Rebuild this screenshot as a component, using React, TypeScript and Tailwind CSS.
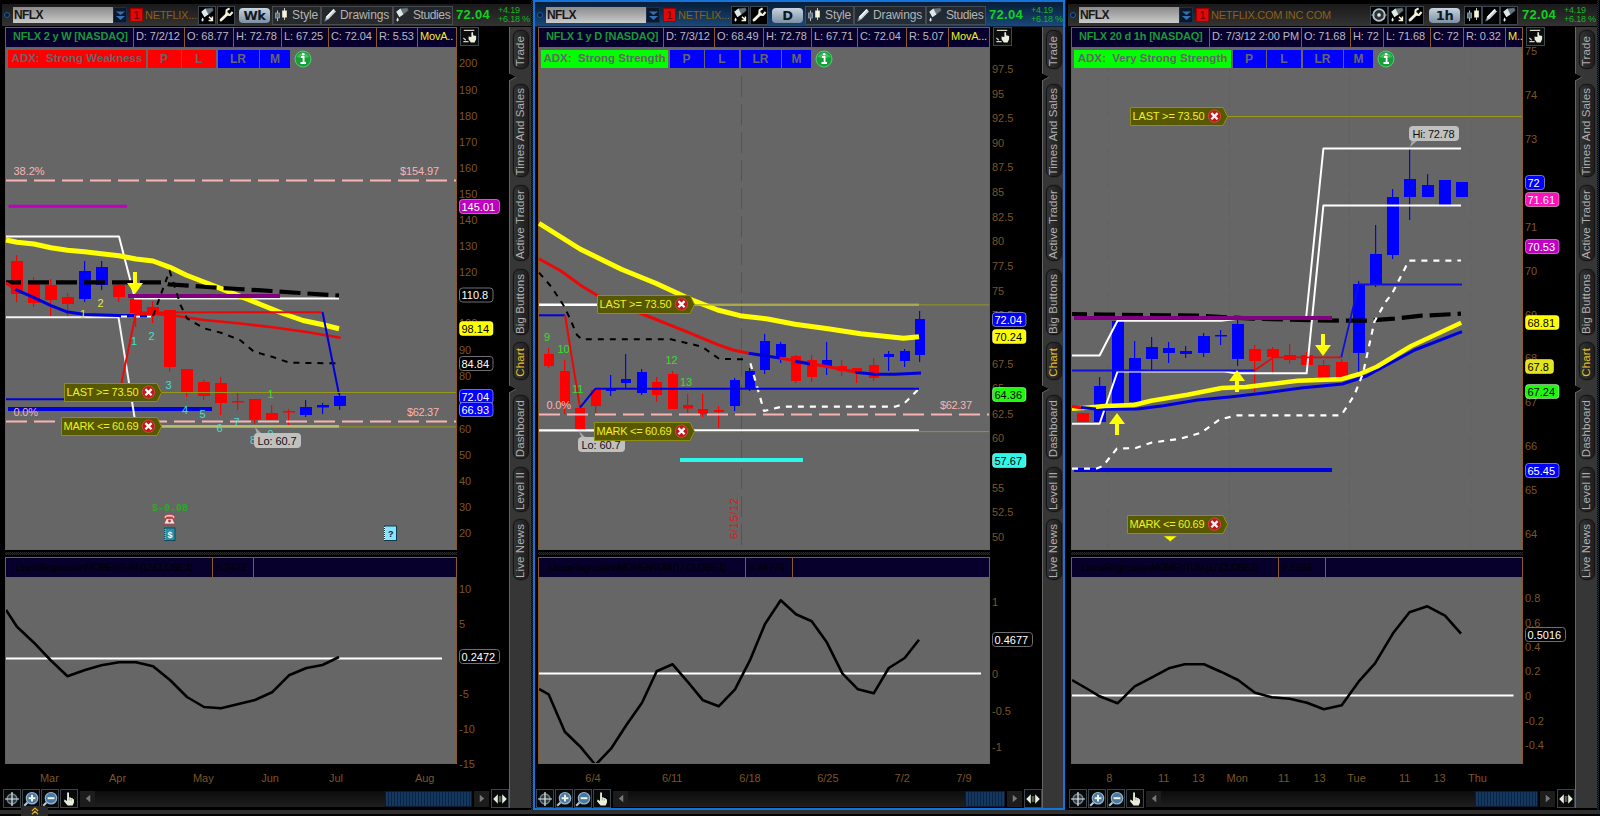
import React from "react";
import clsx from "clsx";

type Candle = [x: number, top: number, bottom: number, high: number, low: number, color: "r" | "b"];
type Line = { pts: string; color: string; w: number; dash?: string; offset?: number };
type Label = { x: number; y: number; text: string; color: string; len?: number; size?: number; mono?: boolean };
type Bubble = { y: number; text: string; fill: string; color: string; w?: number; stroke?: string };
type Tag = { x: number; y: number; text: string };
type Arrow = { x: number; y: number; dir: "up" | "down" };

type PanelData = {
  active?: boolean;
  compact?: boolean;
  company: string;
  period: string;
  info: { text: string; w: string }[];
  adx: { text: string; w: string; color: string }[];
  back: Line[];
  candles: Candle[];
  candleWidth: number;
  lines: Line[];
  labels: Label[];
  arrows: Arrow[];
  tags: Tag[];
  callout: { x: number; y: number; w: number; text: string; tail: string };
  axis: [number, string][];
  bubbles: Bubble[];
  study: { curve: string; zero: string; axis: [number, string][]; bubble: Bubble; cellA: string; cellB: string; name: string; value: string };
  dates: [number, string][];
  thumb: string;
};

const RED = "#ff0000";
const BLUE = "#0000ff";
const LINE_RED = "#ec0808";
const LINE_BLUE = "#0000dc";
const YELLOW = "#ffff00";
const WHITE = "#ffffff";
const PINK = "#f8b4b4";
const CYAN = "#40e0d0";
const GREEN = "#30e030";
const ALERT = "#989818";
const BLACK = "#000000";
const PURPLE = "#800080";
const MAGENTA = "#c000c0";
const AXIS = "#7c5526";

const weekly: PanelData = {
  company: "NETFLIX....",
  period: "Wk",
  info: [
    { text: "NFLX 2 y W [NASDAQ]", w: "w-[128px]" },
    { text: "D: 7/2/12", w: "w-[51px]" },
    { text: "O: 68.77", w: "w-[49px]" },
    { text: "H: 72.78", w: "w-[48px]" },
    { text: "L: 67.25", w: "w-[47px]" },
    { text: "C: 72.04", w: "w-[48px]" },
    { text: "R: 5.53", w: "w-[41px]" },
    { text: "MovA..", w: "w-[38px]" },
  ],
  adx: [
    { text: "ADX:  Strong Weakness", w: "w-[138px]", color: "bg-[#ff0000]" },
    { text: "P", w: "w-[33px]", color: "bg-[#ff0000]" },
    { text: "L", w: "w-[34px]", color: "bg-[#ff0000]" },
    { text: "LR", w: "w-[41px]", color: "bg-[#0000ff]" },
    { text: "M", w: "w-[30px]", color: "bg-[#0000ff]" },
  ],
  back: [],
  candleWidth: 12,
  candles: [
    [17, 261, 294, 255, 302, "r"],
    [34, 284, 303, 277, 307, "r"],
    [51, 285, 300, 279, 317, "r"],
    [68, 297, 304, 293, 318, "r"],
    [85, 271, 299, 261, 302, "b"],
    [102, 267, 285, 261, 290, "b"],
    [119, 285, 297, 284, 302, "r"],
    [136, 299, 313, 299, 327, "r"],
    [153, 307, 314, 301, 323, "r"],
    [170, 310, 367, 310, 372, "r"],
    [187, 369, 393, 369, 397, "r"],
    [204, 382, 396, 380, 400, "r"],
    [221, 383, 403, 377, 415, "r"],
    [238, 401, 402.5, 393, 410, "r"],
    [255, 399, 420, 399, 424, "r"],
    [272, 413, 420, 405, 420, "r"],
    [289, 411, 412.5, 409, 425, "r"],
    [306, 407, 415, 400, 417, "b"],
    [323, 405, 407.5, 403, 414, "b"],
    [340, 396, 406, 393, 410, "b"],
  ],
  lines: [
    { pts: "6,180.5 456,180.5", color: PINK, w: 2, dash: "21 7" },
    { pts: "6,421.5 456,421.5", color: PINK, w: 2, dash: "21 7" },
    { pts: "8.5,206.3 127,206.3", color: MAGENTA, w: 3 },
    { pts: "6,399.3 64,399.3", color: LINE_BLUE, w: 2 },
    { pts: "8,409 212,409", color: LINE_BLUE, w: 4 },
    { pts: "6,236.5 119,236.5 135,298.5 339,298.5", color: WHITE, w: 2 },
    { pts: "6,317.3 118.5,317.3 136,426.5 339,426.5", color: "#f4f4f4", w: 2 },
    { pts: "6,240 17,242.3 34,244 51,247.7 67.5,250.3 84.5,251.7 101.5,253.7 119,255.7 136,259 153,261 170,267.3 186,275 204,282 221,288.7 238,295.3 262,305 283,313.5 303,320.5 322,324.5 339,328.7", color: YELLOW, w: 5 },
    { pts: "6,282.3 162,282.3 169,284.3 190,285.7 207,287 238,289 272,291 300,293 339,295.5", color: BLACK, w: 4.2, dash: "21 7", offset: 6 },
    { pts: "128,296 280,296", color: PURPLE, w: 4 },
    { pts: "6,282.7 15.5,289.5", color: LINE_RED, w: 3 },
    { pts: "15.3,289.3 34,297.7 51,305.7 66.4,311.7 84.8,314.5 119,315.5 151,315.5", color: LINE_BLUE, w: 3 },
    { pts: "121,316.5 151,316.5", color: WHITE, w: 2, dash: "6 7" },
    { pts: "121.3,384 136,312.5 322,312.3", color: LINE_RED, w: 2 },
    { pts: "136,314 155,314 170,315 204,320 238,323.3 272.5,327.3 306.5,332 340.6,337.7", color: LINE_RED, w: 2.6 },
    { pts: "153,316 169.6,270.7 180.5,305 187,318.3 204,328.3 221,332.7 240,340 254,351.7 272,356.7 289.5,362.7 336,363.3", color: BLACK, w: 2, dash: "6 6" },
    { pts: "322.5,312 339,394.3", color: LINE_BLUE, w: 2 },
    { pts: "161,392.5 456,392.5", color: ALERT, w: 1 },
    { pts: "161,426.9 456,426.9", color: ALERT, w: 1 },
  ],
  labels: [
    { x: 13.5, y: 175, text: "38.2%", color: PINK, len: 31 },
    { x: 400, y: 175, text: "$154.97", color: PINK, len: 39 },
    { x: 13.5, y: 416, text: "0.0%", color: PINK, len: 24.5 },
    { x: 407, y: 416, text: "$62.37", color: PINK, len: 32 },
    { x: 80, y: 318, text: "1", color: "#e8e840" },
    { x: 97.5, y: 307, text: "2", color: "#e8e840" },
    { x: 131, y: 345, text: "1", color: CYAN },
    { x: 148.5, y: 340, text: "2", color: CYAN },
    { x: 165.5, y: 389, text: "3", color: CYAN },
    { x: 182, y: 414, text: "4", color: CYAN },
    { x: 199.5, y: 418, text: "5", color: CYAN },
    { x: 216.5, y: 432, text: "6", color: CYAN },
    { x: 233.5, y: 426, text: "7", color: CYAN },
    { x: 250, y: 444, text: "8", color: CYAN },
    { x: 267.5, y: 438, text: "9", color: CYAN },
    { x: 267.5, y: 398, text: "1", color: GREEN },
    { x: 152, y: 511, text: "$-0.08", color: "#20b020", len: 36, size: 10, mono: true },
  ],
  arrows: [{ x: 135, y: 272, dir: "down" }],
  tags: [
    { x: 64, y: 383.5, text: "LAST >= 73.50" },
    { x: 61, y: 417.5, text: "MARK <= 60.69" },
  ],
  callout: { x: 254, y: 433, w: 47, text: "Lo: 60.7", tail: "255,427 257,435 263,435" },
  axis: [
    [63, "200"], [90, "190"], [116, "180"], [142, "170"], [168, "160"], [194, "150"], [220, "140"], [246, "130"],
    [272, "120"], [323, "100"], [350, "90"], [376, "80"], [429, "60"], [455, "50"], [481, "40"], [507, "30"], [533, "20"],
  ],
  bubbles: [
    { y: 199, text: "145.01", fill: MAGENTA, color: WHITE, w: 40 },
    { y: 287.5, text: "110.8", fill: BLACK, color: WHITE, stroke: "#707070" },
    { y: 321, text: "98.14", fill: YELLOW, color: BLACK },
    { y: 356, text: "84.84", fill: BLACK, color: WHITE, stroke: "#707070" },
    { y: 389, text: "72.04", fill: BLUE, color: WHITE },
    { y: 402, text: "66.93", fill: BLUE, color: WHITE },
  ],
  study: {
    name: "LinearRegressionMOMENTUM (17,CLOSE,1)",
    value: "0.2472",
    cellA: "w-[207px]",
    cellB: "w-[41px]",
    curve: "6,610 17,626.7 34,642.7 50.4,660 67.5,676.3 85,670 101.5,665.3 119,662.3 136,662.3 153,666.3 170,680 187,697 204,707 221,708.3 255,700 272,692.3 289,675.3 306.5,668 322.5,665 339,657",
    zero: "6,658.5 442,658.5",
    axis: [[589, "10"], [624.3, "5"], [694, "-5"], [729, "-10"], [764, "-15"]],
    bubble: { y: 649, text: "0.2472", fill: BLACK, color: WHITE, stroke: "#707070", w: 40 },
  },
  dates: [[49.4, "Mar"], [117.5, "Apr"], [203.3, "May"], [270, "Jun"], [336, "Jul"], [424.7, "Aug"]],
  thumb: "w-[87px]",
};

const daily: PanelData = {
  active: true,
  company: "NETFLIX....",
  period: "D",
  info: [
    { text: "NFLX 1 y D [NASDAQ]", w: "w-[125px]" },
    { text: "D: 7/3/12", w: "w-[51px]" },
    { text: "O: 68.49", w: "w-[49px]" },
    { text: "H: 72.78", w: "w-[48px]" },
    { text: "L: 67.71", w: "w-[46px]" },
    { text: "C: 72.04", w: "w-[49px]" },
    { text: "R: 5.07", w: "w-[42px]" },
    { text: "MovA...", w: "w-[40px]" },
  ],
  adx: [
    { text: "ADX:  Strong Strength", w: "w-[127px]", color: "bg-[#00ff00]" },
    { text: "P", w: "w-[34px]", color: "bg-[#0000ff]" },
    { text: "L", w: "w-[34px]", color: "bg-[#0000ff]" },
    { text: "LR", w: "w-[40px]", color: "bg-[#0000ff]" },
    { text: "M", w: "w-[29px]", color: "bg-[#0000ff]" },
  ],
  back: [{ pts: "208.5,76 208.5,546", color: "#e01818", w: 1, dash: "21 7" }],
  candleWidth: 10,
  candles: [
    [16, 354, 366, 348, 368, "r"],
    [32, 371, 403, 360, 414, "r"],
    [47.3, 408, 429, 408, 429, "r"],
    [63, 390, 406, 390, 413, "r"],
    [78, 389, 391, 375, 396, "b"],
    [93, 379, 383, 354, 388, "b"],
    [109, 372, 393, 369, 395, "b"],
    [124, 382, 395, 377, 402, "r"],
    [140, 374, 409, 371, 409, "r"],
    [155, 405, 408.5, 394, 413, "r"],
    [170, 409, 414, 394, 417, "r"],
    [185.5, 410, 412, 406, 428, "r"],
    [202, 380, 406, 378, 411, "b"],
    [217, 371, 389, 368, 391, "b"],
    [232, 341, 370, 334, 374, "b"],
    [247.7, 344, 357, 342, 363, "b"],
    [263, 356, 381, 355, 383, "r"],
    [278.7, 360, 377, 355, 382, "r"],
    [293.5, 360, 367, 342, 375, "b"],
    [309.3, 366, 371, 360, 376, "r"],
    [324, 368, 372, 368, 383, "r"],
    [340.7, 365, 378, 358, 381, "r"],
    [355.5, 354, 357, 351, 371, "b"],
    [371.7, 351, 361, 349, 367, "b"],
    [386.8, 319, 355, 311, 362, "b"],
  ],
  lines: [
    { pts: "6,414.5 456,414.5", color: PINK, w: 2, dash: "21 7" },
    { pts: "6,304.7 64,304.7", color: WHITE, w: 2.4 },
    { pts: "160,304.7 386,304.7", color: "#c8c8a0", w: 2 },
    { pts: "6,430.4 386,430.4", color: WHITE, w: 2.2 },
    { pts: "6,258.7 28,271 48.7,286 64,295.3 110.6,314.5 155.4,332.3 184.7,344.7 200,350 215.7,353.3", color: LINE_RED, w: 3 },
    { pts: "215.7,353.3 246.7,358", color: LINE_BLUE, w: 3 },
    { pts: "246.7,358 298,367.3 322.4,372", color: LINE_RED, w: 3 },
    { pts: "262,361.3 277,364", color: LINE_BLUE, w: 3 },
    { pts: "322.4,372.3 341.4,374.3 362,374.3 388,373", color: LINE_BLUE, w: 3 },
    { pts: "6,223.3 47,249 88.3,269.3 122.7,283.3 160.6,300.7 184.7,310 207,315.7 234.6,319 262,324.3 295,328.7 327.6,333.7 370.6,338.3 386,336.7", color: YELLOW, w: 5 },
    { pts: "6,272.7 18.3,286.7 31.4,306.7 37.6,320 44,335 48.7,339.3 138,339.3 169,346.7 186.4,359 215.7,359.3", color: BLACK, w: 2, dash: "6 6" },
    { pts: "217.4,363.3 231,411 248.4,406.7 362,406.7 370.6,404 386,388.7", color: WHITE, w: 2.2, dash: "6 6" },
    { pts: "6,315.3 32,315.3", color: LINE_BLUE, w: 2 },
    { pts: "32,315 47,407.7", color: LINE_RED, w: 2 },
    { pts: "47,407.7 62.4,388.7 386,388.7", color: LINE_BLUE, w: 2 },
    { pts: "147,460 270,460", color: "#30f8e8", w: 4 },
    { pts: "160,304.9 456,304.9", color: ALERT, w: 1 },
    { pts: "160,431.6 456,431.6", color: ALERT, w: 1 },
  ],
  labels: [
    { x: 13.5, y: 409, text: "0.0%", color: PINK, len: 24.5 },
    { x: 407, y: 409, text: "$62.37", color: PINK, len: 32 },
    { x: 11, y: 341, text: "9", color: GREEN },
    { x: 24.5, y: 353, text: "10", color: GREEN },
    { x: 39, y: 393, text: "11", color: GREEN },
    { x: 132.5, y: 364, text: "12", color: GREEN },
    { x: 147, y: 386, text: "13", color: GREEN },
  ],
  arrows: [],
  tags: [
    { x: 64, y: 295.5, text: "LAST >= 73.50" },
    { x: 61, y: 422.5, text: "MARK <= 60.69" },
  ],
  callout: { x: 45, y: 437, w: 47, text: "Lo: 60.7", tail: "46,431 49,439 54,439" },
  axis: [
    [69, "97.5"], [94, "95"], [118.3, "92.5"], [143, "90"], [167, "87.5"], [192, "85"], [217, "82.5"], [241, "80"], [266, "77.5"],
    [291, "75"], [315, "72.5"], [364, "67.5"], [388, "65"], [414, "62.5"], [438, "60"], [488, "55"], [512, "52.5"], [537, "50"],
  ],
  bubbles: [
    { y: 312, text: "72.04", fill: BLUE, color: WHITE },
    { y: 329, text: "70.24", fill: YELLOW, color: BLACK },
    { y: 387, text: "64.36", fill: "#20f810", color: BLACK },
    { y: 453, text: "57.67", fill: "#30f8e8", color: BLACK },
  ],
  study: {
    name: "LinearRegressionMOMENTUM (17,CLOSE,1)",
    value: "0.46770",
    cellA: "w-[207px]",
    cellB: "w-[47px]",
    curve: "6,689 15.6,694.3 31.8,731.7 47.3,746.7 62.4,765 78,748.7 93.4,725 109,702.7 123.7,671.3 139.6,664.3 155.4,682.7 170,700.3 185.7,706.3 202,689.3 217.4,659.3 232,624 247.7,600.3 263,614.3 278.7,621.3 293.8,642.3 309.3,673.3 325,689.3 340.7,693.3 355.8,668 371.7,658 386,639.7",
    zero: "6,673.5 448,673.5",
    axis: [[602, "1"], [674, "0"], [710.5, "-0.5"], [746.5, "-1"]],
    bubble: { y: 632, text: "0.4677", fill: BLACK, color: WHITE, stroke: "#707070", w: 40 },
  },
  dates: [[60, "6/4"], [139.2, "6/11"], [217, "6/18"], [294.9, "6/25"], [369.2, "7/2"], [430.9, "7/9"]],
  thumb: "w-[40px]",
};

const hourly: PanelData = {
  compact: true,
  company: "NETFLIX.COM INC COM",
  period: "1h",
  info: [
    { text: "NFLX 20 d 1h [NASDAQ]", w: "w-[138px]" },
    { text: "D: 7/3/12 2:00 PM", w: "w-[92px]" },
    { text: "O: 71.68", w: "w-[49px]" },
    { text: "H: 72", w: "w-[33px]" },
    { text: "L: 71.68", w: "w-[47px]" },
    { text: "C: 72", w: "w-[33px]" },
    { text: "R: 0.32", w: "w-[42px]" },
    { text: "M..", w: "w-[16px]" },
  ],
  adx: [
    { text: "ADX:  Very Strong Strength", w: "w-[157px]", color: "bg-[#00ff00]" },
    { text: "P", w: "w-[33px]", color: "bg-[#0000ff]" },
    { text: "L", w: "w-[34px]", color: "bg-[#0000ff]" },
    { text: "LR", w: "w-[40px]", color: "bg-[#0000ff]" },
    { text: "M", w: "w-[29px]", color: "bg-[#0000ff]" },
  ],
  back: [
    { pts: "42.5,48 42.5,548", color: "#616161", w: 1, dash: "6 3" },
    { pts: "163.5,48 163.5,548", color: "#616161", w: 1, dash: "6 3" },
    { pts: "283.5,48 283.5,548", color: "#616161", w: 1, dash: "6 3" },
    { pts: "404.5,48 404.5,548", color: "#616161", w: 1, dash: "6 3" },
  ],
  candleWidth: 12,
  candles: [
    [17, 413, 422, 413, 422, "r"],
    [34, 386, 422, 377, 422, "b"],
    [52, 321, 404, 321, 404, "b"],
    [69, 358, 402, 341, 402, "b"],
    [86, 347, 359, 337, 370, "b"],
    [103, 348, 353, 342, 363, "b"],
    [120, 351, 354, 346, 358, "b"],
    [138, 336, 353, 333, 357, "b"],
    [155, 335, 336.5, 330, 345, "b"],
    [172, 324, 359, 320, 366, "b"],
    [189, 349, 361, 345, 392, "r"],
    [207, 349, 357, 347, 373, "r"],
    [224, 355, 360, 344, 364, "r"],
    [241, 355, 365, 352, 367, "r"],
    [258, 365, 377, 360, 377, "r"],
    [276, 362, 377, 359, 377, "r"],
    [293, 284, 353, 281, 372, "b"],
    [310, 254, 285, 225, 287, "b"],
    [327, 197, 255, 189, 259, "b"],
    [344, 179, 197, 148, 220, "b"],
    [362, 185, 197, 174, 197, "b"],
    [379, 180, 205, 180, 205, "b"],
    [396, 182, 197, 182, 197, "b"],
  ],
  lines: [
    { pts: "6,314 38.8,314.5 97.3,315.3 131.7,315.7 187,318.7 235,320 273,320.7 300.5,320.7 328,318.7 355.6,315.7 395,313.7", color: BLACK, w: 4.2, dash: "21 7", offset: 6 },
    { pts: "6,355.5 33.6,355.5 51.5,320.8 155,320.8 170,319 240,319 257.4,148.5 395,148.5", color: WHITE, w: 2 },
    { pts: "6,423.7 33.6,423.7 51.5,371.5 158.6,371.5 169.6,373.3 240.6,373.3 257.4,205.5 395,205.5", color: WHITE, w: 2 },
    { pts: "8,318 266,318", color: PURPLE, w: 4 },
    { pts: "8,470 266,470", color: LINE_BLUE, w: 4 },
    { pts: "15.3,407.3 31.9,409.3 71.5,409 97.3,405.7 131.7,400 166,396.7 200.6,392.7 235,388 276.4,384 300.5,376 348.7,350 396,331.7", color: LINE_BLUE, w: 3 },
    { pts: "6,408.7 19.8,407.7 38.8,406 68,405 85.3,400.7 121.4,394.7 155.8,388 180,387 207.5,383.7 231.6,380.7 274.6,379.3 293.6,374 310.8,366.7 345.2,346 395.2,322.7", color: YELLOW, w: 4.5 },
    { pts: "6,406.5 16,408", color: LINE_RED, w: 3 },
    { pts: "15,407.5 30,409", color: LINE_BLUE, w: 3 },
    { pts: "6,468.7 30,468.7 37,466 50.8,448.7 69.8,448 85.3,442.7 114.5,438.7 135.2,432.7 154,419.3 171.3,415.3 275.3,415.3 288.4,395 297,373.3 308.4,321.7 319.4,302.3 326.3,293.3 342.8,260.7 395,260.5", color: WHITE, w: 2.2, dash: "6 6" },
    { pts: "6,370.5 188.6,370.5", color: "#1010dc", w: 1.8 },
    { pts: "188.6,370.5 207.5,357.3 275.3,357.3", color: LINE_RED, w: 1.8 },
    { pts: "275.3,357.3 292.6,284.5 396,284.5", color: "#1010dc", w: 1.8 },
    { pts: "161,116.5 456,116.5", color: ALERT, w: 1 },
  ],
  labels: [],
  arrows: [
    { x: 51, y: 413, dir: "up" },
    { x: 171, y: 370, dir: "up" },
    { x: 257, y: 334, dir: "down" },
  ],
  tags: [
    { x: 64, y: 107.5, text: "LAST >= 73.50" },
    { x: 61, y: 515.5, text: "MARK <= 60.69" },
  ],
  callout: { x: 343, y: 126, w: 50, text: "Hi: 72.78", tail: "344,147 346,140 352,140" },
  axis: [
    [51, "75"], [95, "74"], [139, "73"], [227, "71"], [271, "70"], [315, "69"], [358, "68"],
    [402, "67"], [446, "66"], [490, "65"], [534, "64"],
  ],
  bubbles: [
    { y: 175, text: "72", fill: BLUE, color: WHITE, w: 19 },
    { y: 192, text: "71.61", fill: "#ff10b8", color: WHITE },
    { y: 239, text: "70.53", fill: MAGENTA, color: WHITE },
    { y: 315, text: "68.81", fill: YELLOW, color: BLACK },
    { y: 359, text: "67.8", fill: "#e4e41c", color: BLACK, w: 28 },
    { y: 384, text: "67.24", fill: "#20f810", color: BLACK },
    { y: 463, text: "65.45", fill: BLUE, color: WHITE },
  ],
  study: {
    name: "LinearRegressionMOMENTUM (17,CLOSE,1)",
    value: "0.5016",
    cellA: "w-[207px]",
    cellB: "w-[47px]",
    curve: "6,680 21.5,689 33.6,696.3 51.5,703.3 68.7,686.3 86,677.3 102.8,668.3 118.7,664.3 138,664.3 154.8,671.7 172,680 189,692.7 206,697.3 223.7,698.7 241,702.7 257.8,709.3 275.7,705.3 292.6,681.7 309,663.3 327,633.3 343.5,612.3 361.4,606.3 379,615.7 395,633.7",
    zero: "6,695.5 447.5,695.5",
    axis: [[598, "0.8"], [623, "0.6"], [647, "0.4"], [671, "0.2"], [696, "0"], [720.5, "-0.2"], [745, "-0.4"]],
    bubble: { y: 627, text: "0.5016", fill: BLACK, color: WHITE, stroke: "#707070", w: 40 },
  },
  dates: [
    [43.2, "8"], [97.7, "11"], [132.4, "13"], [171.3, "Mon"], [217.8, "11"], [253.6, "13"], [290.5, "Tue"],
    [338.7, "11"], [373.5, "13"], [411.4, "Thu"],
  ],
  thumb: "w-[63px]",
};

const panels = [weekly, daily, hourly];

const sideTabs = [
  { text: "Trade", h: "h-[39px]", mt: "mt-[3px]" },
  { text: "Times And Sales", h: "h-[93px]", mt: "mt-[15px]" },
  { text: "Active Trader", h: "h-[76px]", mt: "mt-[8px]" },
  { text: "Big Buttons", h: "h-[66px]", mt: "mt-[8px]" },
  { text: "Chart", h: "h-[38px]", mt: "mt-[7px]", on: true },
  { text: "Dashboard", h: "h-[64px]", mt: "mt-[15px]" },
  { text: "Level II", h: "h-[45px]", mt: "mt-[8px]" },
  { text: "Live News", h: "h-[61px]", mt: "mt-[7px]" },
];

/* ---------- icons ---------- */

function FlaskIcon({ arrow }: { arrow?: boolean }) {
  return (
    <svg viewBox="0 0 16 16" className="size-4 shrink-0">
      <path d="M4.2 4.6 L6.4 1.4 L13.6 .8 L14.4 3.4 L9.6 7.6 Z" fill="#66757e" stroke="#2c363c" strokeWidth=".5" />
      <path d="M2.2 4.8 L6.4 1.6 L9.4 7.4 L5.4 10.2 Z" fill="#dfe8e8" />
      <path d="M3.6 10.4 Q5.6 13 3.6 14.4 Q1.4 13.4 3.6 10.4 Z" fill="#e4f2f0" />
      {arrow && <path d="M10 9.8 L13 12.8 M13.4 9.6 V13.4 H9.6" stroke="#fffbe0" strokeWidth="1.5" fill="none" />}
    </svg>
  );
}

function WrenchIcon() {
  return (
    <svg viewBox="0 0 16 16" className="size-4 shrink-0">
      <path d="M3 13 L9.5 6.8" stroke="#f4f2dc" strokeWidth="2.8" strokeLinecap="round" />
      <path d="M11.6 1.4 L8.6 3.2 L8.2 7.4 L12 8 L14.6 5" stroke="#f4f2dc" strokeWidth="2" strokeLinejoin="round" fill="none" />
    </svg>
  );
}

function CandleIcon() {
  return (
    <svg viewBox="0 0 16 16" className="size-4 shrink-0">
      <path d="M4.5 3.5 V14 M11.5 1 V13" stroke="#c8c8b8" strokeWidth="1" />
      <rect x="2.5" y="6" width="4" height="5" fill="#5d7488" stroke="#8fa4b4" strokeWidth=".8" />
      <rect x="9.2" y="3.5" width="4.6" height="7" fill="#f6f4dc" />
    </svg>
  );
}

function PencilIcon() {
  return (
    <svg viewBox="0 0 16 16" className="size-4 shrink-0">
      <path d="M3 13.5 L4 9.8 L11.5 2 L14 4.4 L6.5 12.3 Z" fill="#c4d2dc" />
      <path d="M4 9.8 L11.5 2 L12.6 3 L5.2 11 Z" fill="#f2f6f8" />
      <path d="M2.2 14.4 L3.2 11.6 L5.2 13.4 Z" fill="#6f8292" />
    </svg>
  );
}

function TargetIcon() {
  return (
    <svg viewBox="0 0 16 16" className="size-4 shrink-0">
      <circle cx="8" cy="8" r="5.8" fill="#28323a" stroke="#b8c4c8" strokeWidth="1.8" />
      <circle cx="8" cy="8" r="2.2" fill="#dfe6e6" stroke="#101418" strokeWidth=".6" />
      <path d="M0.3 8 H4 M12 8 H15.7" stroke="#9aa2a8" strokeWidth="1" />
    </svg>
  );
}

function HandIcon() {
  return (
    <svg viewBox="0 0 16 16" className="size-4 shrink-0">
      <path d="M6.2 1.6 Q7.4 .8 8 2 V6.4 L9.4 6.2 L10 7 L11.4 7 L12 8 L13 8.4 V11.5 L11.6 14.5 H6.6 L3 10.2 L3.6 8.6 L6 10 Z" fill="#e8eed8" />
      <path d="M8.2 7 V9.4 M10.2 7.6 V9.6" stroke="#8a9484" strokeWidth=".7" />
    </svg>
  );
}

function CrosshairIcon() {
  return (
    <svg viewBox="0 0 16 16" className="size-4 shrink-0">
      <circle cx="8" cy="8" r="5" fill="#2c3a44" stroke="#6f8494" strokeWidth="1.3" />
      <path d="M8 1 V15 M1 8 H15" stroke="#e6eee0" strokeWidth="1.2" />
    </svg>
  );
}

function ZoomIcon({ plus }: { plus?: boolean }) {
  return (
    <svg viewBox="0 0 16 16" className="size-4 shrink-0">
      <path d="M1.2 14.8 L4.5 11.5" stroke="#b8c8d4" strokeWidth="2" />
      <circle cx="9" cy="7.2" r="5.7" fill="#4878a4" stroke="#9cb4c8" strokeWidth="1.2" />
      <path d="M5.6 7.2 H12.4" stroke="#f0f4dc" strokeWidth="2" />
      {plus && <path d="M9 3.8 V10.6" stroke="#f0f4dc" strokeWidth="2" />}
    </svg>
  );
}

function SpreadIcon() {
  return (
    <svg viewBox="0 0 16 16" className="size-4 shrink-0">
      <path d="M1.2 8 L5.8 3.2 V12.8 Z M14.8 8 L10.2 3.2 V12.8 Z" fill="#e8eed8" />
      <path d="M7.3 5 V11 M8.8 5 V11" stroke="#90988c" strokeWidth=".8" />
    </svg>
  );
}

function ScaleHandIcon() {
  return (
    <svg viewBox="0 0 18 18" className="size-[17px]">
      <path d="M3 2.5 H14" stroke="#e8e8d8" strokeWidth="1.2" />
      <path d="M2.5 10.5 L5 13 M2.5 14.5 H8" stroke="#d0d8c8" strokeWidth="1.3" />
      <path d="M8 9 L11 9.6 V4.8 Q12 3.6 12.8 5 V7.6 L16 8.6 V12 L14.4 15.4 H10.4 L8 12 Z" fill="#eaf0da" />
    </svg>
  );
}

/* ---------- pieces ---------- */

function Header({ panel }: { panel: PanelData }) {
  const iconBox = "flex h-[19px] w-[18px] shrink-0 items-center justify-center border border-[#3a4650] bg-black";
  const button =
    "flex h-[19px] shrink-0 items-center border border-[#454b50] bg-[#26282a]/80 text-[12px] tracking-[-0.1px] text-[#b4b4b4]";
  return (
    <div
      className={clsx(
        "flex h-[22px] items-center pl-[2px] text-[12px]",
        panel.active ? "bg-gradient-to-b from-[#08203c] to-[#1a4878]" : "bg-gradient-to-b from-[#1a1a1a] to-[#333333]"
      )}
    >
      <div className="mr-[3px] size-[6px] shrink-0 rounded-full border border-[#1c5ca8] bg-[#0a1c30]" />
      <div className="flex h-4 w-[100px] shrink-0 items-center bg-gradient-to-b from-[#8c8c8c] to-[#cacaca] pl-px text-[12px] font-bold tracking-[-0.6px] text-[#181818]">
        NFLX
      </div>
      <div className="flex h-4 w-[14px] shrink-0 items-center justify-center border border-[#183050] bg-[#0c1828]">
        <svg viewBox="0 0 12 14" className="h-[13px] w-[11px]">
          <path d="M1 2.5 H11 L6 6.5 Z M1 7.5 H11 L6 12 Z" fill="#3470b8" />
        </svg>
      </div>
      <div className="ml-[3px] flex h-[14px] w-[13px] shrink-0 items-center justify-center border border-[#a00000] bg-[#e00808] text-[11px] text-[#580000]">
        1
      </div>
      <div
        className={clsx(
          "ml-[2px] shrink-0 text-[11px] whitespace-nowrap text-[#8c6018]",
          panel.compact ? "w-[159px] tracking-[-0.25px]" : "w-[53px] tracking-[-0.3px]"
        )}
      >
        {panel.company}
      </div>
      {panel.compact && (
        <div className={iconBox}>
          <TargetIcon />
        </div>
      )}
      <div className={iconBox}>
        <FlaskIcon arrow />
      </div>
      <div className={clsx(iconBox, panel.compact ? "ml-0" : "ml-px")}>
        <WrenchIcon />
      </div>
      <div
        className={clsx(
          "flex h-[15px] w-[31px] shrink-0 items-center justify-center rounded-[4px] bg-gradient-to-b from-[#c8d4e0] to-[#7c90a4] font-[DejaVu_Sans] text-[13px] leading-none font-bold tracking-[-0.5px] text-[#101820]",
          panel.compact ? "mr-[4px] ml-[5px]" : "mr-[2px] ml-[4px]"
        )}
      >
        {panel.period}
      </div>
      {panel.compact ? (
        <>
          <div className={iconBox}>
            <CandleIcon />
          </div>
          <div className={iconBox}>
            <PencilIcon />
          </div>
          <div className={iconBox}>
            <FlaskIcon />
          </div>
        </>
      ) : (
        <>
          <div className={clsx(button, "w-[49px] gap-[3px]")}>
            <CandleIcon />
            Style
          </div>
          <div className={clsx(button, "w-[72px] gap-[2px]")}>
            <PencilIcon />
            Drawings
          </div>
          <div className={clsx(button, "w-[60px] gap-[3px] tracking-[-0.4px]")}>
            <FlaskIcon />
            Studies
          </div>
        </>
      )}
      <div className={clsx("w-[42px] shrink-0 text-[13px] font-bold tracking-[0.3px] text-[#10d020]", panel.compact ? "ml-[4px]" : "ml-[3px]")}>
        72.04
      </div>
      <div className="shrink-0 text-[9px] leading-[9px] tracking-[-0.2px] whitespace-nowrap text-[#10b820]">
        <div>+4.19</div>
        <div>+6.18 %</div>
      </div>
    </div>
  );
}

function InfoBar({ panel }: { panel: PanelData }) {
  return (
    <div className="flex h-[20px]">
      <div className="flex w-[452px] border border-b-0 border-[#8c5a20] bg-[#08002c]">
        {panel.info.map((cell, i) => (
          <div
            key={cell.text}
            className={clsx(
              "flex shrink-0 items-center pb-[3px] text-[11px] whitespace-nowrap",
              cell.w,
              i < panel.info.length - 1 && "border-r border-[#8c5a20]",
              i === 0 && "pl-[7px] font-bold tracking-[-0.2px] text-[#189838]",
              i > 0 && "pl-[2px]",
              i > 0 && i < 7 && "tracking-[-0.1px] text-[#b8b8c4]",
              i === 7 && "tracking-[-0.2px] text-[#f0f020]"
            )}
          >
            {cell.text}
          </div>
        ))}
      </div>
      <div className="ml-[3px] flex h-[19px] w-[19px] items-center justify-center border border-[#3c4850] bg-[#0a0c0e]">
        <ScaleHandIcon />
      </div>
    </div>
  );
}

function Plot({ line }: { line: Line }) {
  return (
    <polyline
      points={line.pts}
      fill="none"
      stroke={line.color}
      strokeWidth={line.w}
      strokeDasharray={line.dash}
      strokeDashoffset={line.offset}
      strokeLinejoin="round"
    />
  );
}

function AxisBubble({ bubble }: { bubble: Bubble }) {
  return (
    <g>
      <rect x="459.5" y={bubble.y + 0.5} width={bubble.w ?? 33.5} height="14" rx="3" fill={bubble.fill} stroke={bubble.stroke ?? "#ffffff"} strokeOpacity={bubble.stroke ? 1 : 0.45} />
      <text x="461.5" y={bubble.y + 11.5} fill={bubble.color}>
        {bubble.text}
      </text>
    </g>
  );
}

function AlertTag({ tag }: { tag: Tag }) {
  const { x, y } = tag;
  return (
    <g>
      <path d={`M${x + 0.5} ${y} H157 L161.5 ${y + 9} L157 ${y + 18} H${x + 0.5} Z`} fill="#585800" stroke="#909010" />
      <text x={x + 2.5} y={y + 12.5} fill="#f0f020" textLength={136 - x} lengthAdjust="spacing">
        {tag.text}
      </text>
      <circle cx="148.5" cy={y + 8.7} r="6.2" fill="#c01818" stroke="#e06060" strokeWidth=".6" />
      <path d={`M145.4 ${y + 5.6} L151.6 ${y + 11.8} M151.6 ${y + 5.6} L145.4 ${y + 11.8}`} stroke="#fff" strokeWidth="2.2" />
    </g>
  );
}

function ArrowMark({ arrow }: { arrow: Arrow }) {
  const { x, y } = arrow;
  const d =
    arrow.dir === "down"
      ? `M${x - 2} ${y} H${x + 2} V${y + 11} H${x + 8} L${x} ${y + 22} L${x - 8} ${y + 11} H${x - 2} Z`
      : `M${x} ${y} L${x + 8} ${y + 11} H${x + 2} V${y + 22} H${x - 2} V${y + 11} H${x - 8} Z`;
  return <path d={d} fill={YELLOW} />;
}

function PriceChart({ panel }: { panel: PanelData }) {
  const half = panel.candleWidth / 2;
  const { callout } = panel;
  return (
    <div className="relative h-[503px]">
      <svg viewBox="5 47 504 503" className="absolute inset-0 h-[503px] w-[504px] text-[11px]">
        <rect x="5.5" y="47.5" width="451" height="502" fill="#666666" stroke="#8c5a20" />
        {panel.back.map((l) => (
          <Plot key={l.pts} line={l} />
        ))}
        {panel.candles.map(([x, top, bottom, high, low, c]) => (
          <g key={x} fill={c === "r" ? RED : BLUE}>
            <rect x={Math.round(x) - 1} y={high} width="1.2" height={low - high} />
            <rect x={Math.round(x) - half} y={top} width={panel.candleWidth} height={bottom - top} />
          </g>
        ))}
        {panel.lines.map((l, i) => (
          <Plot key={i} line={l} />
        ))}
        {panel.labels.map((l) => (
          <text
            key={`${l.x}-${l.y}`}
            x={l.x}
            y={l.y}
            fill={l.color}
            textLength={l.len}
            fontSize={l.size}
            fontWeight={l.mono ? 700 : 400}
            fontFamily={l.mono ? "Liberation Mono, monospace" : undefined}
          >
            {l.text}
          </text>
        ))}
        {panel.arrows.map((a) => (
          <ArrowMark key={a.x} arrow={a} />
        ))}
        <g>
          <polygon points={callout.tail} fill="#a8a8a8" />
          <rect x={callout.x} y={callout.y} width={callout.w} height="15" rx="4" fill="#c0c0c0" />
          <text x={callout.x + 3.5} y={callout.y + 11.5} fill="#101010" textLength={callout.w - 8}>
            {callout.text}
          </text>
        </g>
        {panel.tags.map((t) => (
          <AlertTag key={t.text} tag={t} />
        ))}
        {panel.compact && <path d="M97.5 536 H111 L104.2 541.5 Z" fill={YELLOW} stroke="#808010" strokeWidth=".6" />}
        {panel.active && (
          <text transform="translate(204.5 539) rotate(-90)" fill="#e01818" textLength="41">
            6/15/12
          </text>
        )}
        {panel === weekly && <EventIcons />}
        {panel.axis.map(([y, text]) => (
          <text key={text} x="459" y={y + 4} fill={AXIS}>
            {text}
          </text>
        ))}
        {panel.bubbles.map((b) => (
          <AxisBubble key={b.text} bubble={b} />
        ))}
      </svg>
      <div className="relative flex items-center gap-[1.5px] pt-[3px] pl-[3px] font-bold text-[#666666]">
        {panel.adx.map((cell, i) => (
          <div key={cell.text} className={clsx("flex h-[18px] items-center justify-center whitespace-pre", cell.w, cell.color)}>
            <span className={i === 0 ? "text-[11.5px]" : "text-[12px]"}>{cell.text}</span>
          </div>
        ))}
        <svg viewBox="0 0 18 18" className="ml-[2px] size-[18px]">
          <circle cx="9" cy="9" r="8" fill="#18a038" stroke="#58c878" strokeWidth="1" />
          <path d="M2.5 7 Q9 -2 15.5 7 Q9 9 2.5 7 Z" fill="#60d080" opacity=".6" />
          <path d="M7 7 H9.6 V12.5 M6.5 13 H12" stroke="#fff" strokeWidth="1.8" fill="none" />
          <circle cx="9.2" cy="4.2" r="1.3" fill="#fff" />
        </svg>
      </div>
    </div>
  );
}

function EventIcons() {
  return (
    <g>
      <path d="M164 518 Q164 514.5 169.5 514.5 Q175 514.5 175 518 L172.5 518.5 V517 H166.5 V518.5 Z" fill="#f4d0d0" stroke="#c03030" strokeWidth=".7" />
      <path d="M166.5 518.5 H172.5 L175 524 H164 Z" fill="#f4e0e0" stroke="#c03030" strokeWidth=".7" />
      <circle cx="169.5" cy="521" r="1.4" fill="#c03030" />
      <rect x="164.5" y="528" width="10.5" height="12.5" fill="#2890a8" stroke="#104858" />
      <path d="M165 529 V540" stroke="#a0e0f0" strokeDasharray="1 1" />
      <text x="167.5" y="538" fontSize="9" fontWeight="700" fill="#e8ffff">
        $
      </text>
      <rect x="384.5" y="526" width="12" height="14.5" fill="#88e4fc" stroke="#103848" />
      <path d="M384.5 527 V540" stroke="#e8ffff" strokeDasharray="1 1" />
      <text x="388" y="537" fontSize="9" fontWeight="700" fill="#082030">
        ?
      </text>
    </g>
  );
}

function StudyChart({ panel }: { panel: PanelData }) {
  const { study } = panel;
  return (
    <>
      <div className="flex h-5 w-[452px] border border-b-0 border-[#8c5a20] bg-[#08002c] text-[10px] font-bold text-[#02000c]">
        <div className={clsx("flex items-center overflow-hidden border-r border-[#8c5a20] pl-[9px] tracking-[-0.9px] whitespace-nowrap", study.cellA)}>
          {study.name}
        </div>
        <div className={clsx("flex items-center border-r border-[#8c5a20] pl-[3px]", study.cellB)}>{study.value}</div>
      </div>
      <svg viewBox="5 577 504 212" className="h-[212px] w-[504px] text-[11px]">
        <rect x="5.5" y="577.5" width="451" height="186" fill="#666666" stroke="#8c5a20" />
        <clipPath id={`study-${panel.period}`}>
          <rect x="6" y="578" width="450" height="185" />
        </clipPath>
        <polyline points={study.zero} stroke="#fff" strokeWidth="2" />
        <polyline points={study.curve} clipPath={`url(#study-${panel.period})`} fill="none" stroke="#000" strokeWidth="2.6" strokeLinejoin="round" />
        {study.axis.map(([y, text]) => (
          <text key={text} x="459" y={y + 4} fill={AXIS}>
            {text}
          </text>
        ))}
        <AxisBubble bubble={study.bubble} />
        {panel.dates.map(([x, text]) => (
          <text key={x} x={x} y="782" fill={AXIS} textAnchor="middle">
            {text}
          </text>
        ))}
      </svg>
    </>
  );
}

function Toolbar({ panel }: { panel: PanelData }) {
  const box = "flex h-[19px] w-[18px] shrink-0 items-center justify-center border border-[#3c444c] bg-[#06080a]";
  return (
    <div className="-ml-[2px] flex h-[19px] w-[506px] items-center">
      <div className="flex gap-px">
        <div className={box}>
          <CrosshairIcon />
        </div>
        <div className={box}>
          <ZoomIcon plus />
        </div>
        <div className={box}>
          <ZoomIcon />
        </div>
        <div className={box}>
          <HandIcon />
        </div>
      </div>
      <div className="ml-[2px] flex h-4 w-[15px] items-center justify-center bg-[#1c1c1c]">
        <svg viewBox="0 0 8 10" className="h-[9px] w-[6px]">
          <path d="M7 0 V10 L1 5 Z" fill="#787878" />
        </svg>
      </div>
      <div className="h-4 flex-1 bg-gradient-to-b from-[#0c0c0c] to-[#1e1e1e]" />
      <div className={clsx("h-4 border border-[#0c1c34] bg-[repeating-linear-gradient(90deg,#143860_0_2px,#0c2444_2px_3px)]", panel.thumb)} />
      <div className="ml-[2px] flex h-4 w-[15px] items-center justify-center bg-[#1c1c1c]">
        <svg viewBox="0 0 8 10" className="h-[9px] w-[6px]">
          <path d="M1 0 V10 L7 5 Z" fill="#787878" />
        </svg>
      </div>
      <div className={clsx(box, "ml-[2px]")}>
        <SpreadIcon />
      </div>
    </div>
  );
}

function SideTabs() {
  return (
    <div className="relative flex w-[22px] flex-col items-center border-l border-[#666] bg-[#363636]">
      {sideTabs.map((tab) => (
        <div
          key={tab.text}
          className={clsx(
            "flex w-4 shrink-0 items-center justify-center rounded-[7px] border border-[#141414] bg-gradient-to-r from-[#343434] to-[#1e1e1e] pt-[3px] shadow-[0_0_1px_#000]",
            tab.h,
            tab.mt,
            tab.on ? "text-[#e8c020]" : "text-[#b0b0b0]"
          )}
        >
          <span className="rotate-180 text-[11.5px] leading-none tracking-[0.1px] whitespace-nowrap [writing-mode:vertical-rl]">{tab.text}</span>
        </div>
      ))}
      <svg viewBox="0 0 10 10" className="absolute top-[45px] -left-[2px] size-[10px]">
        <path d="M0 1 L8 5 L1 9 Z" fill="#000" />
        <path d="M8 5 L1 9" stroke="#777" strokeWidth=".8" />
      </svg>
      <svg viewBox="0 0 10 10" className="absolute top-[357px] -left-[2px] size-[10px]">
        <path d="M0 1 L8 5 L1 9 Z" fill="#000" />
        <path d="M8 5 L1 9" stroke="#777" strokeWidth=".8" />
      </svg>
    </div>
  );
}

function Panel({ panel }: { panel: PanelData }) {
  return (
    <div className="relative h-[810px] w-[533px] shrink-0 bg-black">
      <div className={clsx("h-[27px] pt-[4px] pr-px", panel.active ? "bg-[#08203c]" : "bg-black")}>
        <div className="pl-[2px]">
          <Header panel={panel} />
        </div>
      </div>
      <div className="flex h-[781px]">
        <div className="ml-[5px] flex w-[504px] shrink-0 flex-col">
          <InfoBar panel={panel} />
          <PriceChart panel={panel} />
          <div className="h-[7px] w-[452px] bg-[repeating-conic-gradient(#2c2c2c_0_25%,#0a0a0a_0_50%)] bg-size-[2px_2px] bg-clip-content py-[2px]" />
          <StudyChart panel={panel} />
          <Toolbar panel={panel} />
        </div>
        <SideTabs />
      </div>
      {panel.active ? (
        <div className="pointer-events-none absolute inset-0 right-px border-2 border-[#1474dc]" />
      ) : (
        <div className="absolute top-0 right-0 h-full w-[2px] bg-[repeating-conic-gradient(#263038_0_25%,#04080c_0_50%)] bg-size-[2px_2px]" />
      )}
    </div>
  );
}

export default function App() {
  return (
    <div className="flex h-[816px] w-[1600px] flex-col overflow-hidden bg-black font-['Liberation_Sans',Arial,sans-serif]">
      <div className="flex">
        {panels.map((p) => (
          <Panel key={p.period} panel={p} />
        ))}
      </div>
      <div className="relative h-[6px]">
        <div className="h-[4px] bg-[#303030]" />
        <div className="absolute bottom-0 left-[21px] flex h-[10px] w-[27px] items-center justify-center rounded-t-[2px] bg-[#2a2a2a]">
          <svg viewBox="0 0 10 9" className="h-[8px] w-[10px]">
            <path d="M1.5 4.5 L5 1.2 L8.5 4.5 M1.5 8.2 L5 4.9 L8.5 8.2" stroke="#e0b020" strokeWidth="1.3" fill="none" />
          </svg>
        </div>
      </div>
    </div>
  );
}
